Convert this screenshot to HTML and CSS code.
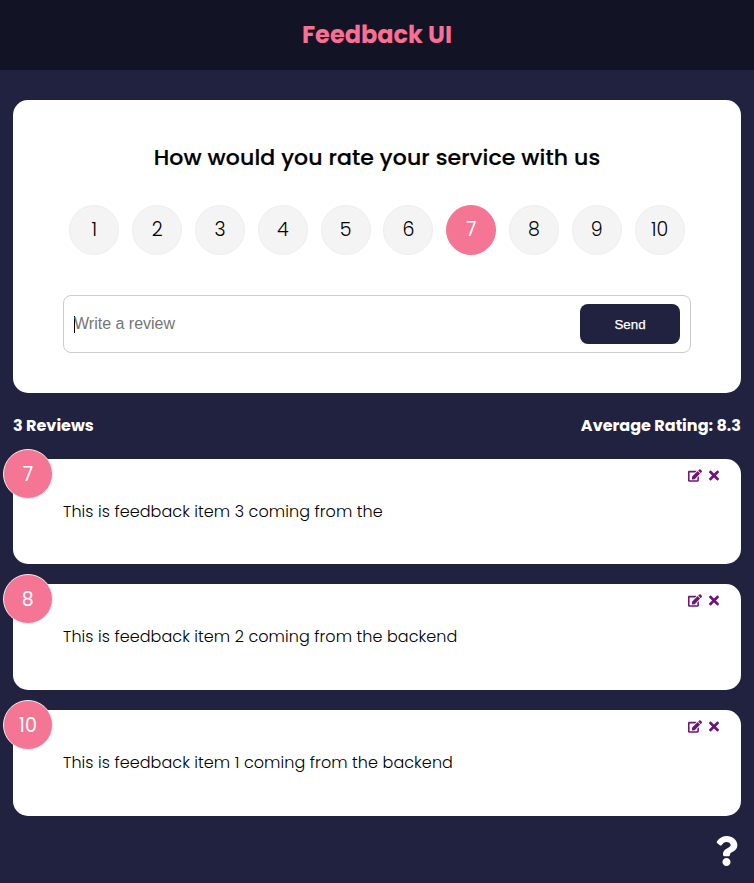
FILE: index.html
```html
<!DOCTYPE html>
<html lang="en">
<head>
<meta charset="utf-8">
<title>Feedback UI</title>
<link rel="stylesheet" href="styles.css">
</head>
<body>
<svg class="sprite" aria-hidden="true">
  <symbol id="edit" viewBox="0 0 576 512"><path d="M402.6 83.2l90.2 90.2c3.8 3.8 3.8 10 0 13.8L274.4 405.6l-92.8 10.3c-12.4 1.4-22.9-9.1-21.5-21.5l10.3-92.8L388.8 83.2c3.8-3.8 10-3.8 13.8 0zm162-22.9l-48.8-48.8c-15.2-15.2-39.9-15.2-55.2 0l-35.4 35.4c-3.8 3.8-3.8 10 0 13.8l90.2 90.2c3.8 3.8 10 3.8 13.8 0l35.4-35.4c15.2-15.3 15.2-40 0-55.2zM384 346.2V448H64V128h229.8c3.2 0 6.2-1.3 8.5-3.5l40-40c7.6-7.6 2.2-20.5-8.5-20.5H48C21.5 64 0 85.5 0 112v352c0 26.5 21.5 48 48 48h352c26.5 0 48-21.5 48-48V306.2c0-10.7-12.9-16-20.5-8.5l-40 40c-2.2 2.3-3.5 5.3-3.5 8.5z"/></symbol>
  <symbol id="times" viewBox="0 0 352 512"><path d="M242.72 256l100.07-100.07c12.28-12.28 12.28-32.19 0-44.48l-22.24-22.24c-12.28-12.28-32.19-12.28-44.48 0L176 189.28 75.93 89.21c-12.28-12.28-32.19-12.28-44.48 0L9.21 111.45c-12.28 12.28-12.28 32.19 0 44.48L109.28 256 9.21 356.07c-12.28 12.28-12.28 32.19 0 44.48l22.24 22.24c12.28 12.28 32.2 12.28 44.48 0L176 322.72l100.07 100.07c12.28 12.28 32.2 12.28 44.48 0l22.24-22.24c12.28-12.28 12.28-32.19 0-44.48L242.72 256z"/></symbol>
</svg>
<header class="header"><h2 class="brand">Feedback UI</h2></header>
<main class="container">
  <section class="card form-card">
    <h2 class="question">How would you rate your service with us</h2>
    <ul class="rating">
      <li>1</li><li>2</li><li>3</li><li>4</li><li>5</li><li>6</li><li class="selected">7</li><li>8</li><li>9</li><li>10</li>
    </ul>
    <div class="input-group">
      <div class="field"><span class="caret"></span><span class="placeholder">Write a review</span></div>
      <button class="send">Send</button>
    </div>
  </section>
  <div class="stats"><h4>3 Reviews</h4><h4>Average Rating: 8.3</h4></div>
  <article class="card item">
    <div class="badge">7</div>
    <div class="actions"><svg class="edit"><use href="#edit"/></svg><svg class="close"><use href="#times"/></svg></div>
    <p>This is feedback item 3 coming from the</p>
  </article>
  <article class="card item">
    <div class="badge">8</div>
    <div class="actions"><svg class="edit"><use href="#edit"/></svg><svg class="close"><use href="#times"/></svg></div>
    <p>This is feedback item 2 coming from the backend</p>
  </article>
  <article class="card item">
    <div class="badge">10</div>
    <div class="actions"><svg class="edit"><use href="#edit"/></svg><svg class="close"><use href="#times"/></svg></div>
    <p>This is feedback item 1 coming from the backend</p>
  </article>
</main>
<svg class="help" viewBox="0 0 384 512"><path d="M202.021 0C122.202 0 70.503 32.703 29.914 91.026c-7.363 10.58-5.093 25.086 5.178 32.874l43.138 32.709c10.373 7.865 25.132 6.026 33.253-4.148 25.049-31.381 43.63-49.449 82.757-49.449 30.764 0 68.816 19.799 68.816 49.631 0 22.552-18.617 34.134-48.993 51.164-35.423 19.86-82.299 44.576-82.299 106.405V320c0 13.255 10.745 24 24 24h72.471c13.255 0 24-10.745 24-24v-5.773c0-42.86 125.268-44.645 125.268-160.627C377.504 66.256 286.902 0 202.021 0zM192 373.459c-38.196 0-69.271 31.075-69.271 69.271 0 38.195 31.075 69.27 69.271 69.27s69.271-31.075 69.271-69.27-31.075-69.271-69.271-69.271z"/></svg>
</body>
</html>
```
FILE: styles.css
```css
* { box-sizing: border-box; margin: 0; padding: 0; }
body {
  font-family: Poppins, Inter, sans-serif;
  font-size: 16px;
  line-height: 1.6;
  font-weight: 300;
  background: #202240;
  color: #000;
  min-height: 883px;
}
.sprite { position: absolute; width: 0; height: 0; }
.header { height: 70px; display: flex; align-items: center; justify-content: center; background: #121426; }
.brand { font-size: 24px; font-weight: 700; color: #fb6f92; }
.container { padding: 0 13px; }
.card { position: relative; background: #fff; border-radius: 15px; padding: 40px 50px; }
.form-card { margin-top: 30px; height: 293px; }
.question { font-size: 22px; line-height: 35px; font-weight: 500; letter-spacing: 0.11px; text-align: center; white-space: nowrap; -webkit-text-stroke: 0.2px #000; }
.rating { display: flex; justify-content: space-around; list-style: none; margin: 30px 0 40px; }
.rating li { width: 50px; height: 50px; border: 1px solid #eee; border-radius: 50%; background: #f4f4f4; font-size: 19px; line-height: 48px; text-align: center; }
.rating .selected { background: #f47694; border-color: #f47694; color: #fff; font-weight: 400; }
.input-group { display: flex; align-items: center; height: 58px; border: 1px solid #ccc; border-radius: 8px; padding: 8px 10px; }
.field { flex: 1; display: flex; align-items: center; height: 20px; font: 16px/20px "Liberation Sans", sans-serif; color: #757575; }
.caret { width: 1px; height: 17px; background: #000; margin-right: -1px; }
.send { width: 100px; height: 40px; border: 0; border-radius: 8px; background: #202240; color: #fff; font: 13.333px "Liberation Sans", sans-serif; -webkit-text-stroke: 0.25px #fff; }
.stats { display: flex; justify-content: space-between; align-items: center; height: 65.8px; color: #fff; }
.stats h4 { font-size: 16px; font-weight: 700; white-space: nowrap; }
.item { margin-bottom: 20px; height: 105.6px; }
.item p { white-space: nowrap; letter-spacing: 0.065px; }
.badge { position: absolute; top: -10px; left: -10px; width: 50px; height: 50px; border: 1px solid #eee; border-radius: 50%; background: #f47694; color: #fff; font-size: 19px; font-weight: 400; letter-spacing: 0.3px; line-height: 49px; text-align: center; }
.actions { position: absolute; top: 10px; right: 22px; height: 13px; display: flex; align-items: center; gap: 7px; fill: #6f1478; }
.edit { width: 14px; height: 13px; }
.close { width: 10px; height: 15px; }
.help { position: absolute; right: 16.5px; bottom: 17px; width: 23px; height: 30px; fill: #fff; }
```
